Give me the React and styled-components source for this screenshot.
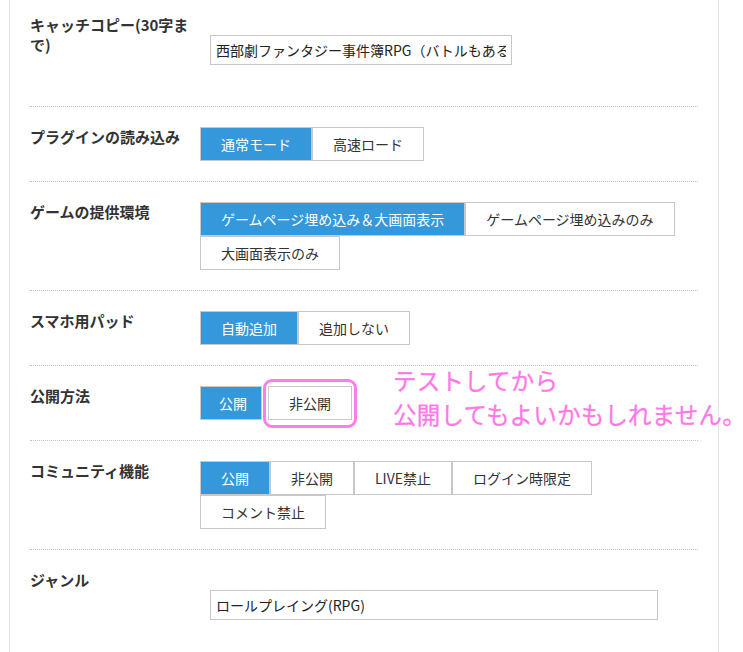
import React from 'react'
import styled, { createGlobalStyle } from 'styled-components'

const GlobalStyle = createGlobalStyle`
  body {
    margin: 0;
    background: #fff;
    font-family: 'Noto Sans CJK JP', 'Noto Sans', sans-serif;
    color: #333;
  }
`

const settings = [
  { label: 'プラグインの読み込み', options: ['通常モード', '高速ロード'], active: 0 },
  {
    label: 'ゲームの提供環境',
    options: ['ゲームページ埋め込み＆大画面表示', 'ゲームページ埋め込みのみ', '大画面表示のみ'],
    active: 0,
  },
  { label: 'スマホ用パッド', options: ['自動追加', '追加しない'], active: 0 },
]

const community = ['公開', '非公開', 'LIVE禁止', 'ログイン時限定', 'コメント禁止']

const App = () => (
  <>
    <GlobalStyle />
    <Panel>
      <Row>
        <Label>キャッチコピー(30字まで)</Label>
        <div>
          <TextInput
            width={302}
            defaultValue="西部劇ファンタジー事件簿RPG（バトルもある）"
            readOnly
          />
        </div>
      </Row>

      {settings.map((s) => (
        <Row key={s.label}>
          <Label>{s.label}</Label>
          <Group>
            {s.options.map((o, i) => (
              <Option key={o} active={i === s.active}>
                {o}
              </Option>
            ))}
          </Group>
        </Row>
      ))}

      <Row>
        <Label>公開方法</Label>
        <Group>
          <Option active tight>
            公開
          </Option>
          <Highlight>
            <Option>非公開</Option>
          </Highlight>
        </Group>
        <Note>
          テストしてから
          <br />
          公開してもよいかもしれません。
        </Note>
      </Row>

      <Row>
        <Label>コミュニティ機能</Label>
        <Group>
          {community.map((o, i) => (
            <Option key={o} active={i === 0}>
              {o}
            </Option>
          ))}
        </Group>
      </Row>

      <Row>
        <Label>ジャンル</Label>
        <div>
          <TextInput width={448} defaultValue="ロールプレイング(RPG)" readOnly />
        </div>
      </Row>
    </Panel>
  </>
)

const Panel = styled.div`
  box-sizing: border-box;
  width: 710px;
  min-height: 652px;
  margin-left: 9px;
  padding: 0 20px;
  border-left: 1px solid #e4e4e4;
  border-right: 1px solid #e4e4e4;
`

const Row = styled.div`
  position: relative;
  display: grid;
  grid-template-columns: 170px 1fr;
  padding: 20px 0;
  border-bottom: 1px dotted #c4c4c4;

  &:first-child {
    padding: 15px 0 21px;
  }

  &:last-child {
    border-bottom: none;
  }
`

const Label = styled.div`
  font-size: 15px;
  font-weight: 700;
  line-height: 20px;
  color: #333;
  padding-right: 4px;
`

const TextInput = styled.input`
  box-sizing: border-box;
  display: block;
  width: ${(p) => p.width}px;
  height: 30px;
  margin: 20px 0 20px 10px;
  padding: 0 5px;
  border: 1px solid #c8c8c8;
  border-radius: 0;
  font-family: 'Noto Sans CJK JP', sans-serif;
  font-size: 14px;
  color: #222;
  outline: none;
`

const Group = styled.div`
  display: flex;
  flex-wrap: wrap;
  align-items: flex-start;
`

const Option = styled.div`
  box-sizing: border-box;
  height: 34px;
  display: flex;
  align-items: center;
  padding: ${(p) => (p.tight ? '0 14px 0 18px' : '0 20px')};
  border: 1px solid #c8c8c8;
  background: ${(p) => (p.active ? '#3498db' : '#fff')};
  color: ${(p) => (p.active ? '#fff' : '#333')};
  font-size: 14px;
  white-space: nowrap;
`

const Highlight = styled.div`
  position: relative;
  margin-left: 6px;

  &::after {
    content: '';
    position: absolute;
    top: -7px;
    left: -5px;
    right: -5px;
    bottom: -8px;
    border: 3px solid #ff7de8;
    border-radius: 9px;
  }
`

const Note = styled.div`
  position: absolute;
  top: -3px;
  left: 363px;
  font-size: 23.5px;
  line-height: 34px;
  color: #ff78e8;
  white-space: nowrap;
  letter-spacing: 0.2px;
  -webkit-text-stroke: 0.3px #ff78e8;
`

export default App
